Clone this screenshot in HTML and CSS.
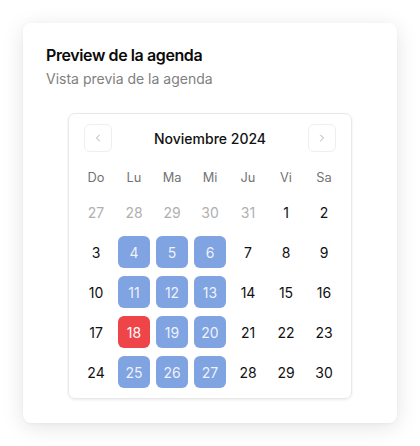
FILE: index.html
```html
<!DOCTYPE html>
<html lang="es">
<head>
<meta charset="utf-8">
<link rel="stylesheet" href="styles.css">
</head>
<body>
<div class="card">
  <div class="card-header">
    <h3 class="card-title">Preview de la agenda</h3>
    <p class="card-desc">Vista previa de la agenda</p>
  </div>
  <div class="card-content">
    <div class="calendar">
      <div class="nav">
        <button class="nav-btn" aria-label="Mes anterior">
          <svg width="12" height="12" viewBox="0 0 24 24" fill="none" stroke="currentColor" stroke-width="1.6" stroke-linecap="round" stroke-linejoin="round"><path d="m15 18-6-6 6-6"/></svg>
        </button>
        <div class="month">Noviembre 2024</div>
        <button class="nav-btn" aria-label="Mes siguiente">
          <svg width="12" height="12" viewBox="0 0 24 24" fill="none" stroke="currentColor" stroke-width="1.6" stroke-linecap="round" stroke-linejoin="round"><path d="m9 18 6-6-6-6"/></svg>
        </button>
      </div>
      <div class="grid head">
        <div class="hd">Do</div><div class="hd">Lu</div><div class="hd">Ma</div><div class="hd">Mi</div><div class="hd">Ju</div><div class="hd">Vi</div><div class="hd">Sa</div>
      </div>
      <div class="grid days">
        <div class="day out">27</div><div class="day out">28</div><div class="day out">29</div><div class="day out">30</div><div class="day out">31</div><div class="day">1</div><div class="day">2</div>
        <div class="day">3</div><div class="day sel">4</div><div class="day sel">5</div><div class="day sel">6</div><div class="day">7</div><div class="day">8</div><div class="day">9</div>
        <div class="day">10</div><div class="day sel">11</div><div class="day sel">12</div><div class="day sel">13</div><div class="day">14</div><div class="day">15</div><div class="day">16</div>
        <div class="day">17</div><div class="day today">18</div><div class="day sel">19</div><div class="day sel">20</div><div class="day">21</div><div class="day">22</div><div class="day">23</div>
        <div class="day">24</div><div class="day sel">25</div><div class="day sel">26</div><div class="day sel">27</div><div class="day">28</div><div class="day">29</div><div class="day">30</div>
      </div>
    </div>
  </div>
</div>
</body>
</html>
```

FILE: styles.css
```css
* { box-sizing: border-box; }
html, body { margin: 0; background: #ffffff; }
body {
  padding: 23px;
  font-family: Inter, "Noto Sans", "Liberation Sans", sans-serif;
  color: #0a0a0a;
}
.card {
  width: 374px;
  height: 400px;
  background: #ffffff;
  border-radius: 8px;
  box-shadow: 0 4px 22px rgba(0, 0, 0, 0.11), 0 1px 3px rgba(0, 0, 0, 0.04);
}
.card-header {
  padding: 24px 24px 24px 23px;
  display: flex;
  flex-direction: column;
  gap: 6px;
}
.card-title {
  margin: 0;
  font-size: 16px;
  line-height: 16px;
  font-weight: 600;
  letter-spacing: -0.025em;
  color: #0a0a0a;
}
.card-desc {
  margin: 0;
  font-size: 14px;
  line-height: 20px;
  color: #808080;
}
.card-content {
  padding: 0 24px 24px;
  display: flex;
  justify-content: center;
}
.calendar {
  width: 284px;
  border: 1px solid #e8e8e8;
  border-radius: 7px;
  padding: 10px 11px 10px;
  box-shadow: 0 1px 3px rgba(0, 0, 0, 0.08);
}
.nav {
  display: flex;
  align-items: center;
  justify-content: space-between;
  padding: 0 4px;
  height: 28px;
}
.nav-btn {
  width: 28px;
  height: 28px;
  padding: 0;
  border: 1px solid #efefef;
  border-radius: 6px;
  background: #ffffff;
  color: #9a9a9a;
  display: flex;
  align-items: center;
  justify-content: center;
}
.month {
  font-size: 14px;
  font-weight: 500;
  color: #111111;
}
.grid {
  display: grid;
  grid-template-columns: repeat(7, 32px);
  column-gap: 6px;
}
.head {
  margin-top: 16px;
  height: 20px;
}
.hd {
  text-align: center;
  font-size: 12.8px;
  line-height: 20px;
  color: #737373;
}
.days {
  margin-top: 8px;
  row-gap: 8px;
}
.day {
  height: 32px;
  display: flex;
  align-items: center;
  justify-content: center;
  font-size: 14px;
  color: #111111;
  border-radius: 6px;
}
.day.out { color: #b0b0b0; }
.day.sel {
  background: #80a3e2;
  color: rgba(255, 255, 255, 0.88);
}
.day.today {
  background: #ef4548;
  color: #ffffff;
}
```
